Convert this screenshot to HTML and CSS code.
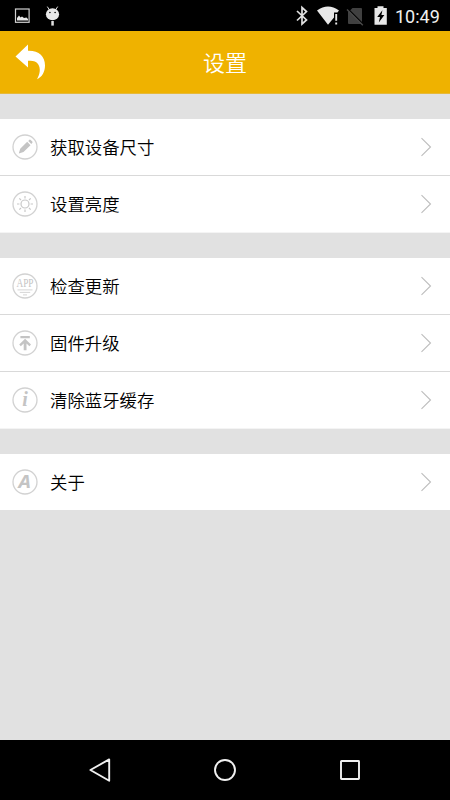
FILE: index.html
```html
<!DOCTYPE html>
<html lang="zh-CN">
<head>
    <meta charset="UTF-8">
    <meta name="viewport" content="width=device-width, initial-scale=1.0">
    <title>设置</title>
    <link rel="stylesheet" href="styles.css">
</head>
<body>
    <!-- Shared chevron -->
    <svg class="defs" width="0" height="0">
        <symbol id="chevron" viewBox="0 0 12 20">
            <path d="M1.5 1.2 L10.5 10 L1.5 18.8" fill="none" stroke="#bdbdbd" stroke-width="1.1"/>
        </symbol>
    </svg>

    <div class="status-bar">
        <svg class="status-icons" width="70" height="31" viewBox="0 0 70 31">
            <rect x="15.5" y="9" width="13.6" height="13.3" fill="none" stroke="#d0d0d0" stroke-width="1.2"/>
            <path d="M17 20.5 V18 L19 15.5 L20.5 17.5 L22 16.5 L24 18 L26.5 17.5 L28 19 V20.5 Z" fill="#e8e8e8"/>
            <path d="M47.3 6.6 L49.5 10 M57.7 6.6 L55.5 10" stroke="#e0e0e0" stroke-width="1"/>
            <ellipse cx="52.5" cy="14.2" rx="6.6" ry="6" fill="#e8e8e8"/>
            <circle cx="49.9" cy="12.5" r="0.8" fill="#000"/>
            <circle cx="55.1" cy="12.5" r="0.8" fill="#000"/>
            <rect x="51.3" y="21" width="2.5" height="4.6" fill="#e0e0e0"/>
        </svg>
        <div class="status-right">
            <svg width="98" height="31" viewBox="292 0 98 31">
                <path d="M297 11 L306.5 20 L302 24 V7.5 L306.5 11.5 L297 20.5" fill="none" stroke="#e0e0e0" stroke-width="1.7"/>
                <path d="M317 10.4 Q328 2.6 339 10.4 L337.4 12.4 H334 V17.6 L328 24.7 Z" fill="#e8e8e8"/>
                <path d="M336.2 14 V20.8 M336.2 22.6 V24.6" stroke="#e8e8e8" stroke-width="1.9"/>
                <path d="M349.5 11 L352.5 8 H361 Q362 8 362 9 V24 H349 Q348 24 348 23 V12 Z" fill="#404040"/>
                <path d="M348 9 L363.5 24.5" stroke="#000" stroke-width="1.4"/>
                <path d="M347 9.5 L362.8 25.2" stroke="#484848" stroke-width="1.4"/>
                <path d="M374.5 8 H377.5 V6.2 H383.5 V8 H386.8 V24.7 H374.5 Z" fill="#e8e8e8"/>
                <path d="M382.4 10.3 L377.2 17 H380 L378.8 22.5 L384.4 15.1 H381.4 Z" fill="#000"/>
            </svg>
            <span class="clock">10:49</span>
        </div>
    </div>

    <header class="header">
        <svg class="back" width="34" height="40" viewBox="14 43 34 40">
            <path d="M15.5 57.5 L28 45.5 V51.8 C39 51.5 45 57.5 45 66.5 C45 73 42 78 37 80.3 C40 75 41 69.5 38 65 C36 62 33 61.5 28 61.8 V68.5 Z" fill="#fff"/>
        </svg>
        <h1 class="title">设置</h1>
    </header>

    <main class="settings">
        <ul class="group">
            <li class="row">
                <svg class="icon" viewBox="0 0 26 26">
                    <circle class="ring" cx="13" cy="13" r="12"/>
                    <path class="solid" d="M6.8 19.5 L8.2 14.8 L15.2 7.8 L18.5 11.2 L11.5 18.1 Z M16.2 6.9 L17.4 5.8 Q18 5.3 18.7 5.9 L20.3 7.5 Q20.9 8.2 20.3 8.8 L19.3 10.1 Z"/>
                </svg>
                <span class="label">获取设备尺寸</span>
                <svg class="arrow"><use href="#chevron"/></svg>
            </li>
            <li class="row">
                <svg class="icon" viewBox="0 0 26 26">
                    <circle class="ring" cx="13" cy="13" r="12"/>
                    <circle class="line" cx="13" cy="13" r="4"/>
                    <path class="line" d="M13 5 V7.4 M13 18.6 V21 M5 13 H7.4 M18.6 13 H21 M7.3 7.3 L9 9 M17 17 L18.7 18.7 M18.7 7.3 L17 9 M9 17 L7.3 18.7"/>
                </svg>
                <span class="label">设置亮度</span>
                <svg class="arrow"><use href="#chevron"/></svg>
            </li>
        </ul>

        <ul class="group">
            <li class="row">
                <svg class="icon" viewBox="0 0 26 26">
                    <circle class="ring" cx="13" cy="13" r="12"/>
                    <text class="app-text" x="13" y="14" textLength="17" lengthAdjust="spacingAndGlyphs">APP</text>
                    <path class="thin" d="M5.5 16.9 H20.5 M7.8 19.4 H18.2 M11 21.9 H15"/>
                </svg>
                <span class="label">检查更新</span>
                <svg class="arrow"><use href="#chevron"/></svg>
            </li>
            <li class="row">
                <svg class="icon" viewBox="0 0 26 26">
                    <circle class="ring" cx="13" cy="13" r="12"/>
                    <path class="solid" d="M8.4 6 H17.8 V8.2 H8.4 Z M13.1 8.8 L19 14.6 L17.4 16.3 L14.5 13.6 V20.3 H11.7 V13.6 L8.8 16.3 L7.2 14.6 Z"/>
                </svg>
                <span class="label">固件升级</span>
                <svg class="arrow"><use href="#chevron"/></svg>
            </li>
            <li class="row">
                <svg class="icon" viewBox="0 0 26 26">
                    <circle class="ring" cx="13" cy="13" r="12"/>
                    <text class="info-text" x="13" y="19.3">i</text>
                </svg>
                <span class="label">清除蓝牙缓存</span>
                <svg class="arrow"><use href="#chevron"/></svg>
            </li>
        </ul>

        <ul class="group">
            <li class="row">
                <svg class="icon" viewBox="0 0 26 26">
                    <circle class="ring" cx="13" cy="13" r="12"/>
                    <text class="about-text" x="12.6" y="18.6" textLength="12.4" lengthAdjust="spacingAndGlyphs">A</text>
                </svg>
                <span class="label">关于</span>
                <svg class="arrow"><use href="#chevron"/></svg>
            </li>
        </ul>
    </main>

    <nav class="nav-bar">
        <svg width="26" height="26" viewBox="0 0 26 26">
            <path d="M3.4 13 L22.2 2.4 V23.8 Z"/>
        </svg>
        <svg width="26" height="26" viewBox="0 0 26 26">
            <circle cx="13" cy="13" r="10"/>
        </svg>
        <svg width="26" height="26" viewBox="0 0 26 26">
            <rect x="4" y="4" width="18" height="18" rx="0.5"/>
        </svg>
    </nav>
</body>
</html>
```
FILE: styles.css
```css
* {
    box-sizing: border-box;
}
body {
    margin: 0;
    height: 800px;
    display: flex;
    flex-direction: column;
    background-color: #e1e1e1;
    font-family: "Noto Sans CJK SC", sans-serif;
    font-weight: 350;
    overflow: hidden;
}
svg {
    display: block;
    flex: none;
}
.defs {
    position: absolute;
}

/* Status bar */
.status-bar {
    height: 31px;
    display: flex;
    justify-content: space-between;
    background-color: #000;
}
.status-right {
    display: flex;
    align-items: center;
    padding-right: 10px;
}
.clock {
    width: 50px;
    color: #f0f0f0;
    font-family: Roboto, sans-serif;
    font-size: 18px;
    font-weight: 400;
    line-height: 31px;
    padding: 2px 0 0 5px;
}

/* Header */
.header {
    height: 63px;
    display: grid;
    grid-template-columns: 48px 1fr 48px;
    align-items: center;
    background-color: #efb200;
    border-bottom: 1px solid #e6b93a;
}
.back {
    margin-left: 14px;
}
.title {
    margin: 0;
    color: #fff;
    font-size: 22px;
    font-weight: 350;
    line-height: 60px;
    padding-bottom: 2px;
    text-align: center;
}

/* Settings list */
.settings {
    flex: 1;
    padding-top: 25px;
}
.group {
    list-style-type: none;
    margin: 0 0 25px;
    padding: 0;
    background-color: #fff;
}
.row {
    height: 57px;
    display: flex;
    align-items: center;
    padding: 0 18px 0 12px;
    border-bottom: 1px solid #d9d9d9;
}
.row:last-child {
    border-bottom: 1px solid #f4f4f4;
}
.group:last-child .row {
    height: 56px;
    border-bottom: none;
}
.icon {
    width: 26px;
    height: 26px;
}
.label {
    flex: 1;
    margin-left: 12px;
    color: #000;
    font-size: 17.4px;
    line-height: 26px;
}
.arrow {
    width: 12px;
    height: 20px;
}
.ring {
    fill: none;
    stroke: #d2d2d2;
    stroke-width: 1.3;
}
.line {
    fill: none;
    stroke: #c8c8c8;
    stroke-width: 1.2;
}
.thin {
    fill: none;
    stroke: #d0d0d0;
    stroke-width: 0.9;
}
.solid {
    fill: #c4c4c4;
}
.app-text,
.info-text,
.about-text {
    fill: #c4c4c4;
    text-anchor: middle;
}
.app-text {
    font-family: "Liberation Serif", serif;
    font-size: 12.5px;
}
.info-text {
    font-family: "Liberation Serif", serif;
    font-size: 20px;
    font-style: italic;
    font-weight: bold;
}
.about-text {
    font-family: "Open Sans", sans-serif;
    font-size: 17px;
    font-style: italic;
    font-weight: bold;
}

/* Navigation bar */
.nav-bar {
    height: 60px;
    display: flex;
    justify-content: space-between;
    align-items: center;
    padding: 0 87px;
    background-color: #000;
}
.nav-bar svg {
    fill: none;
    stroke: #f0f0f0;
    stroke-width: 1.9;
    stroke-linejoin: round;
}
```
